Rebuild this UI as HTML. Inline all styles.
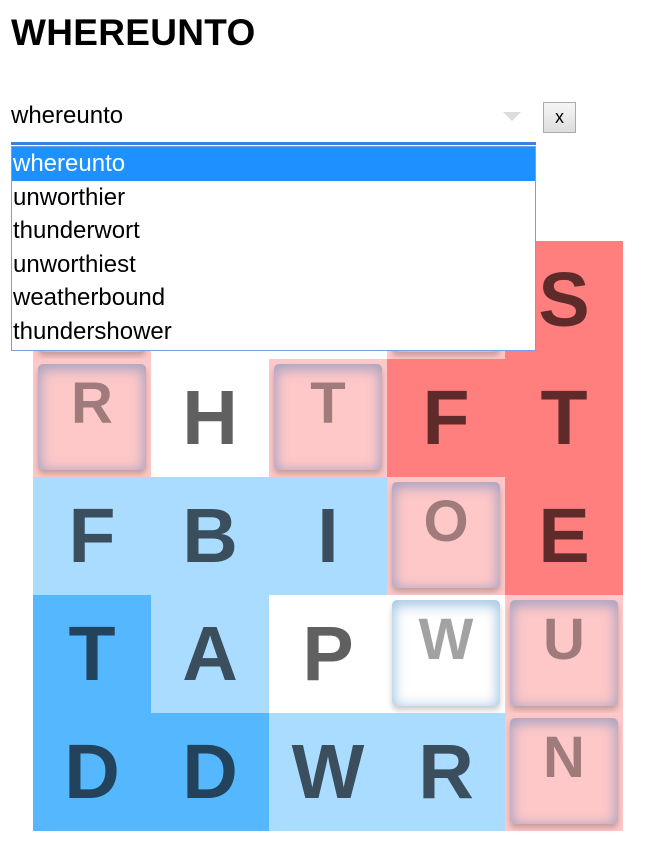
<!DOCTYPE html>
<html><head><meta charset="utf-8"><style>
body{margin:0;width:645px;height:854px;background:#fff;position:relative;overflow:hidden;font-family:"Liberation Sans",sans-serif}
h1{position:absolute;left:11px;top:12px;margin:0;font-size:37px;font-weight:bold;letter-spacing:0.3px}
.sel{position:absolute;left:11px;top:102px;font-size:24px;color:#000}
.arrow{position:absolute;left:503px;top:112px;width:0;height:0;border-left:9px solid transparent;border-right:9px solid transparent;border-top:9px solid #ddd}
.line{position:absolute;left:11px;top:142px;width:525px;height:3px;background:#3b82e0}
.btn{position:absolute;left:543px;top:102px;width:33px;height:31px;border:1px solid #aaa;background:linear-gradient(#f6f6f6,#ddd);box-sizing:border-box;font-size:18px;text-align:center;line-height:29px}
.list{position:absolute;left:11px;top:146px;width:523px;height:203px;border:1px solid #7a9ee0;background:#fff;z-index:5}
.list div{height:33.5px;line-height:33px;font-size:24px;padding-left:1px}
.list .on{background:#1e90ff;color:#fff}
.grid{position:absolute;left:33px;top:241px;width:590px;height:590px}
.c{position:absolute;width:118px;height:118px;font-weight:bold;font-size:77px;text-align:center;line-height:118px}
.w{background:#fff;color:#606060}.r{background:#ff7f7f;color:#5f2a2a}.lb{background:#aadcff;color:#3a4e5e}.b{background:#55b8ff;color:#23435c}
.p{background:#ffc8c8}.pw{background:#fff}
.t{position:absolute;left:5px;top:5px;width:108px;height:106px;border-radius:5px;box-shadow:inset 0 3px 12px 3px rgba(110,140,190,.6),0 4px 6px rgba(0,0,0,.22);color:rgba(80,60,60,.55);font-size:58px;line-height:80px}
.pw .t{box-shadow:inset 0 3px 12px 3px rgba(120,170,210,.65),0 4px 6px rgba(0,0,0,.2);color:rgba(100,100,100,.6)}
</style></head><body>
<h1>WHEREUNTO</h1>
<div class="sel">whereunto</div>
<div class="arrow"></div>
<div class="btn">x</div>
<div class="line"></div>
<div class="list"><div class="on">whereunto</div><div>unworthier</div><div>thunderwort</div><div>unworthiest</div><div>weatherbound</div><div>thundershower</div></div>
<div class="grid">
<div class="c p" style="left:0;top:0"><div class="t">S</div></div>
<div class="c w" style="left:118px;top:0">E</div>
<div class="c w" style="left:236px;top:0">H</div>
<div class="c p" style="left:354px;top:0"><div class="t">E</div></div>
<div class="c r" style="left:472px;top:0">S</div>

<div class="c p" style="left:0;top:118px"><div class="t">R</div></div>
<div class="c w" style="left:118px;top:118px">H</div>
<div class="c p" style="left:236px;top:118px"><div class="t">T</div></div>
<div class="c r" style="left:354px;top:118px">F</div>
<div class="c r" style="left:472px;top:118px">T</div>

<div class="c lb" style="left:0;top:236px">F</div>
<div class="c lb" style="left:118px;top:236px">B</div>
<div class="c lb" style="left:236px;top:236px">I</div>
<div class="c p" style="left:354px;top:236px"><div class="t">O</div></div>
<div class="c r" style="left:472px;top:236px">E</div>

<div class="c b" style="left:0;top:354px">T</div>
<div class="c lb" style="left:118px;top:354px">A</div>
<div class="c w" style="left:236px;top:354px">P</div>
<div class="c pw" style="left:354px;top:354px"><div class="t">W</div></div>
<div class="c p" style="left:472px;top:354px"><div class="t">U</div></div>

<div class="c b" style="left:0;top:472px">D</div>
<div class="c b" style="left:118px;top:472px">D</div>
<div class="c lb" style="left:236px;top:472px">W</div>
<div class="c lb" style="left:354px;top:472px">R</div>
<div class="c p" style="left:472px;top:472px"><div class="t">N</div></div>
</div>
</body></html>
